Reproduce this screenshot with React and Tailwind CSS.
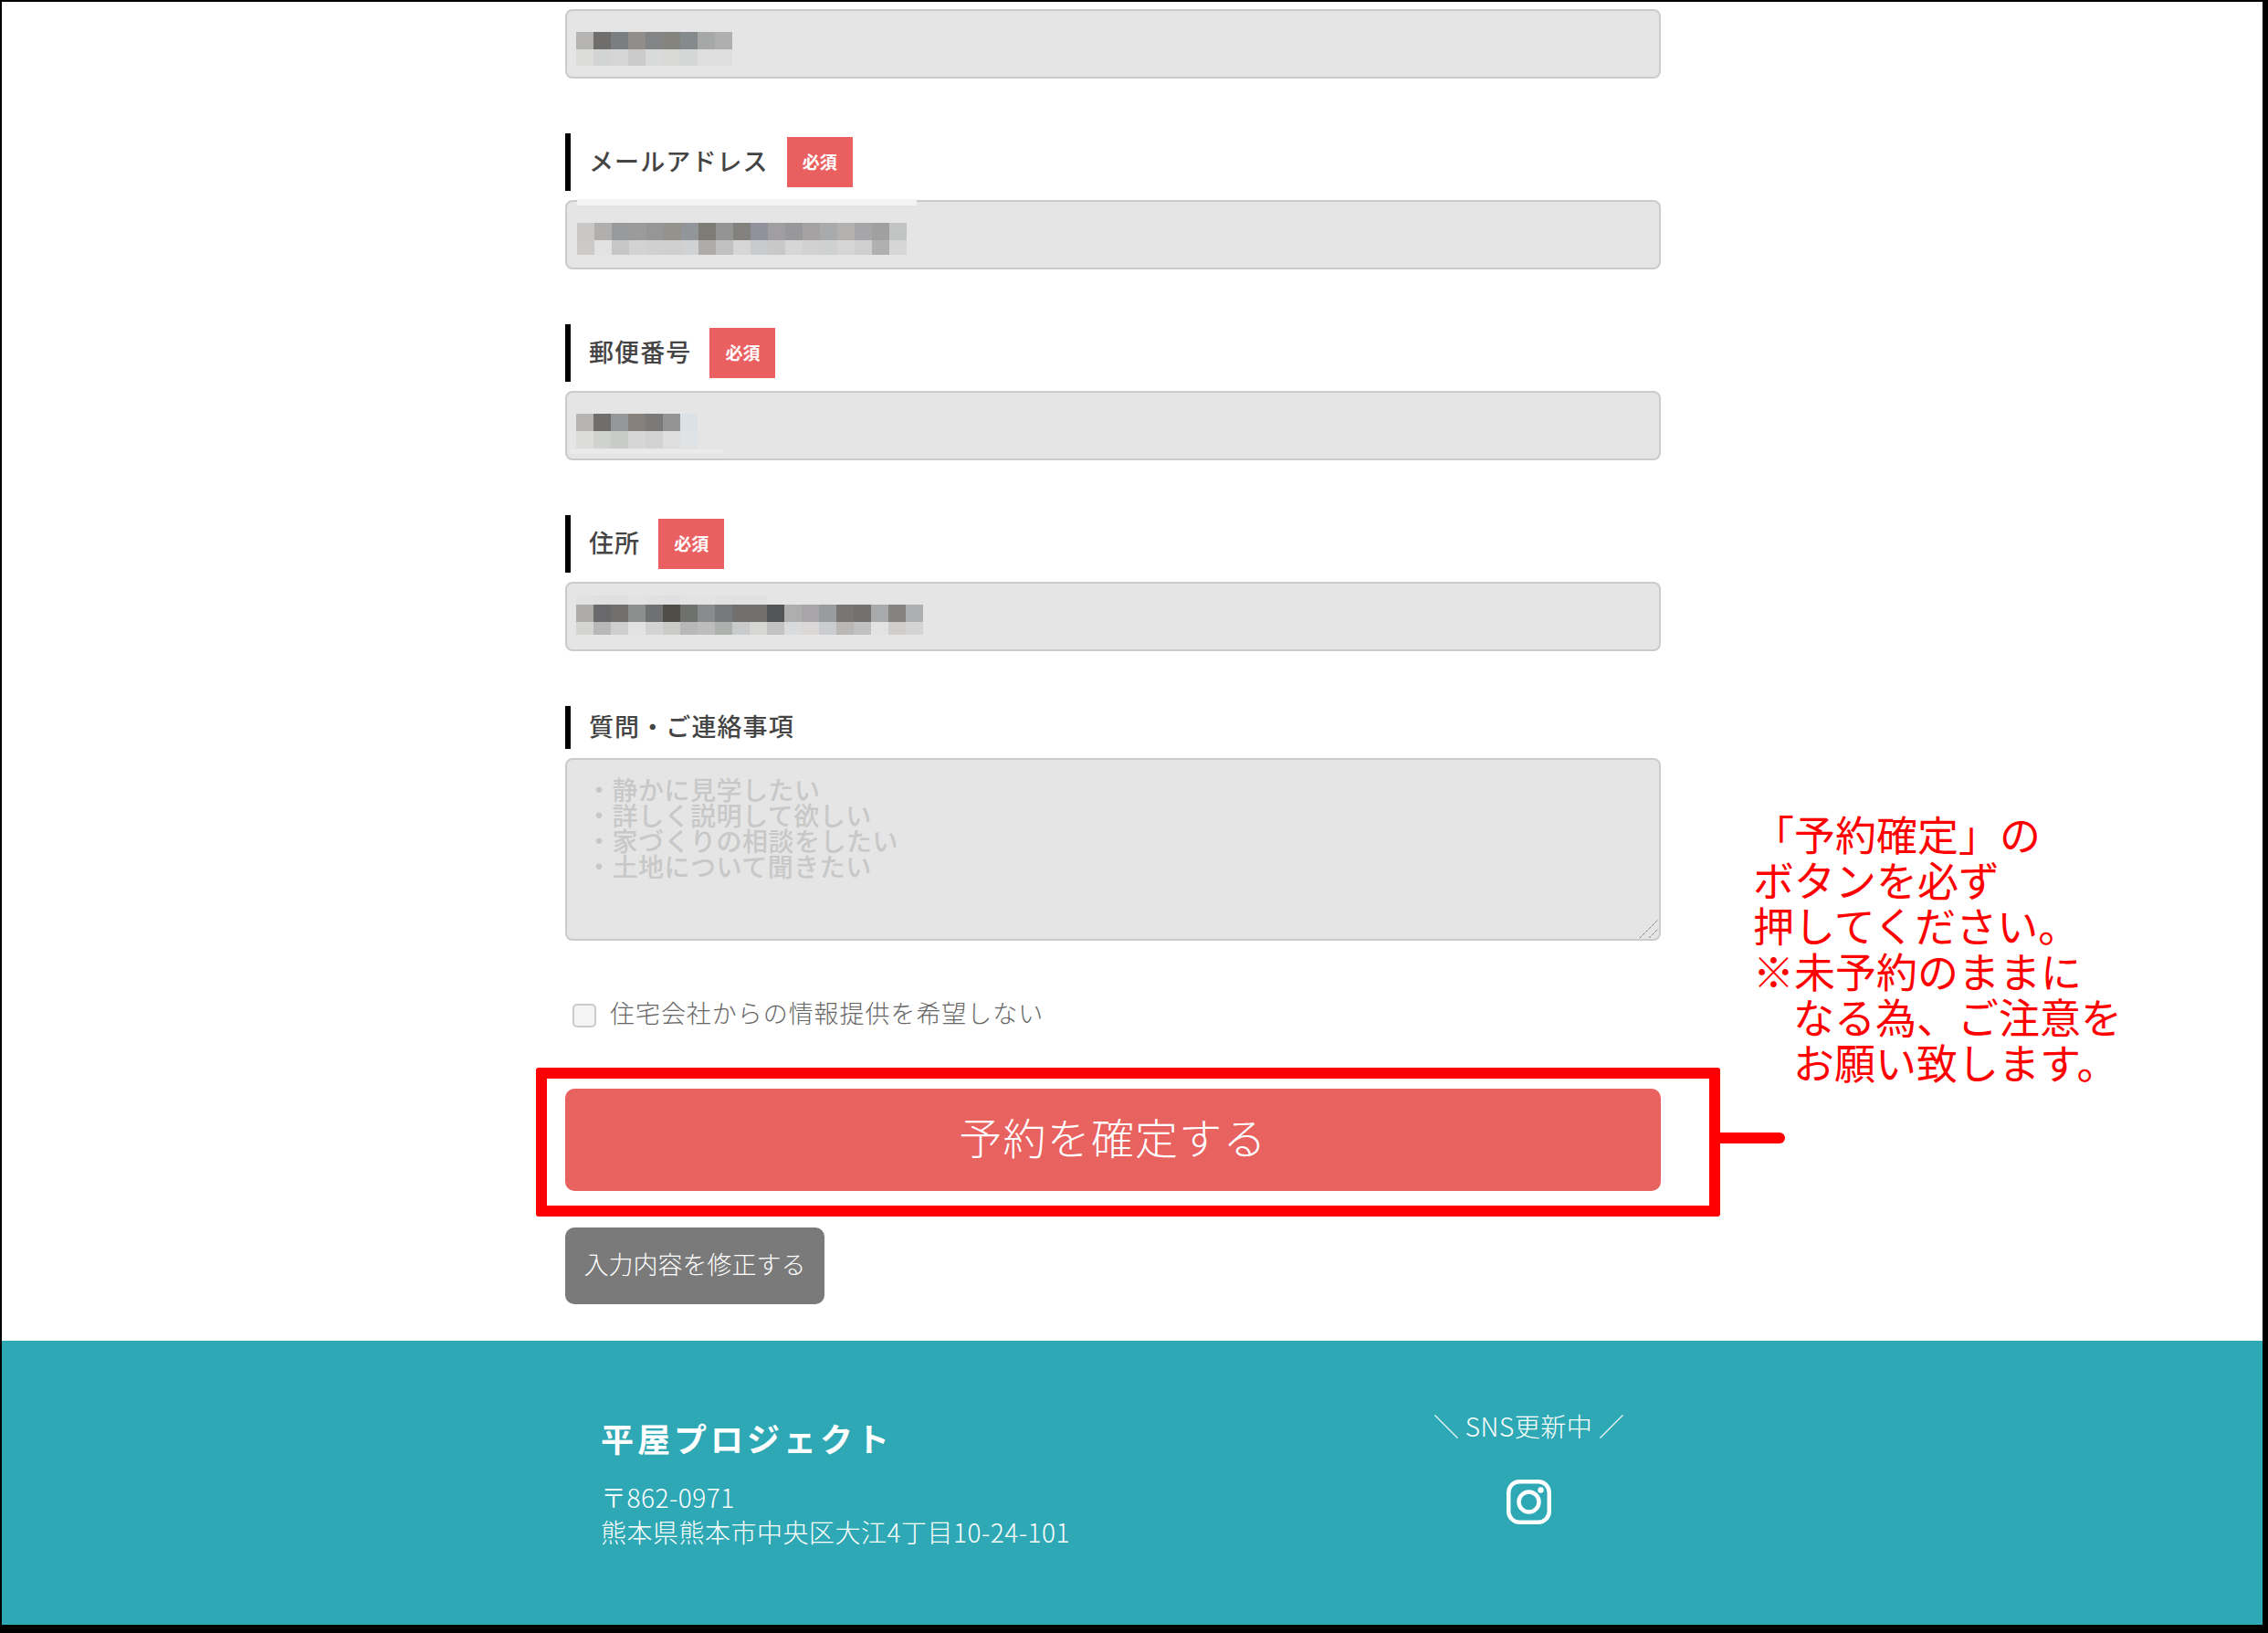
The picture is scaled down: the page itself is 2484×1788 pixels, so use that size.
const font = { fontFamily: '"Noto Sans CJK JP", "Noto Sans", sans-serif' }

const pixelRows = {
  name: {
    className: 'pt-[23px] pl-[10px]',
    rows: [
      { h: 'h-[19px]', colors: ['#b5b4b2', '#706e6c', '#7b7e81', '#918d8a', '#828486', '#85837e', '#858a8c', '#a6a8a7', '#afafaf'] },
      { h: 'h-[18px]', colors: ['#dcdcda', '#d3d5d4', '#d6d6d6', '#cbcbcb', '#d9dbda', '#d8d8d5', '#d5d7d6', '#dedede', '#dedede'] },
    ],
  },
  mail: {
    className: 'pt-[23px] pl-[11px]',
    rows: [
      { h: 'h-[19px]', colors: ['#c9c8c6', '#b0afad', '#999a9c', '#9a9b9a', '#959695', '#93928d', '#92969a', '#7c7b76', '#939493', '#82817e', '#90919a', '#a09ea0', '#98989b', '#a4a2a3', '#a9aaac', '#b3b2b0', '#a6a6a8', '#a0a0a0', '#c2c3c3'] },
      { h: 'h-[16px]', colors: ['#cbcac8', '#e2e2e2', '#c6c6c6', '#d2d2d2', '#d0d0d0', '#cfcfcf', '#d0d1d3', '#adacaa', '#c0c1c0', '#d6d6d6', '#c9cacd', '#c8c8c8', '#d6d6d6', '#d1d1d1', '#cfd0d0', '#d5d5d5', '#cfcfcf', '#b0b0b0', '#d6d6d6'] },
    ],
  },
  zip: {
    className: 'pt-[23px] pl-[10px]',
    rows: [
      { h: 'h-[19px]', colors: ['#b6b5b2', '#706e6b', '#95989a', '#86817d', '#7b7a79', '#949494', '#dce1e5'] },
      { h: 'h-[19px]', colors: ['#dcdcda', '#d0d2d0', '#c9cbc9', '#d6d6d6', '#d2d2d2', '#dedede', '#e0e3e6'] },
    ],
  },
  address: {
    className: 'pt-[13px] pl-[10px]',
    rows: [
      { h: 'h-[10px]', colors: ['#e2e2e2', '#dfdfdf', '#dfdfdf', '#e3e3e3', '#e1e1e1', '#dfdfdf', '#e3e3e3', '#e3e3e3', '#e1e1e1', '#e1e1e1', '#e1e1e1', '#e5e5e5', '#e5e5e5', '#e5e5e5', '#e5e5e5', '#e5e5e5', '#e5e5e5', '#e5e5e5', '#e5e5e5', '#e5e5e5'] },
      { h: 'h-[19px]', colors: ['#aeaca8', '#69696c', '#716e6d', '#8c8e8d', '#6f7072', '#4f4d48', '#6f716d', '#8a8b8c', '#777a7c', '#72706e', '#71706e', '#535456', '#aeaeae', '#a8a6a8', '#999c9d', '#777674', '#727170', '#a9aaac', '#85837f', '#aeafb2'] },
      { h: 'h-[14px]', colors: ['#d4d4d3', '#b8b8b8', '#cfcfcf', '#e2e2e2', '#d3d3d3', '#cbcbc9', '#b8b8b8', '#bdbdbd', '#aeb0ae', '#c9cacc', '#d6d6d4', '#c2c2c2', '#d9dadc', '#d9d8d6', '#cbcccf', '#b9b8b6', '#c1c1c1', '#e2e2e2', '#cfcecc', '#d4d4d4'] },
    ],
  },
}

const placeholder = '・静かに見学したい\n・詳しく説明して欲しい\n・家づくりの相談をしたい\n・土地について聞きたい'

const noteLines = [
  { text: '「予約確定」の', indent: false },
  { text: 'ボタンを必ず', indent: false },
  { text: '押してください。', indent: false },
  { text: '※未予約のままに', indent: false },
  { text: 'なる為、ご注意を', indent: true },
  { text: 'お願い致します。', indent: true },
]

function Pixelated({ name }) {
  const data = pixelRows[name]
  return (
    <div className={data.className}>
      {data.rows.map((row, i) => (
        <div key={i} className={`flex ${row.h}`}>
          {row.colors.map((color, j) => (
            <div key={j} className="w-[19px] h-full" style={{ backgroundColor: color }} />
          ))}
        </div>
      ))}
    </div>
  )
}

function FieldLabel({ children, required, short }) {
  return (
    <div className={`flex items-center border-l-[6px] border-black pl-[20px] ${short ? 'h-[47px]' : 'h-[63px]'}`}>
      <span className="-mt-[3px] text-[27px] font-medium tracking-[1.1px] text-[#444]">{children}</span>
      {required && (
        <span className="ml-[20px] flex h-[55px] w-[72px] items-center justify-center bg-[#ea6060] text-[19px] font-bold text-white">
          必須
        </span>
      )}
    </div>
  )
}

function Field({ label, name, strip }) {
  return (
    <div className="mt-[60px] first:mt-0">
      {label && (
        <div className="mb-[10px]">
          <FieldLabel required>{label}</FieldLabel>
        </div>
      )}
      <div className="relative h-[76px] overflow-visible rounded-[8px] border-2 border-[#cbcbcb] bg-[#e5e5e5]">
        <Pixelated name={name} />
        {strip}
      </div>
    </div>
  )
}

function InstagramIcon() {
  return (
    <svg viewBox="0 0 49 49" className="h-[49px] w-[49px]" fill="none" stroke="white" strokeWidth="4.5">
      <rect x="2.25" y="2.25" width="44.5" height="44.5" rx="12" />
      <circle cx="24.5" cy="24.5" r="11" />
      <circle cx="37.5" cy="11.5" r="3.2" fill="white" stroke="none" />
    </svg>
  )
}

function App() {
  return (
    <div className="relative h-[1788px] w-[2484px] overflow-hidden border-t-2 border-r-[6px] border-l-2 border-black bg-white" style={font}>
      <main className="ml-[617px] w-[1200px] pt-[8px]">
        <Field name="name" />
        <Field
          label="メールアドレス"
          name="mail"
          strip={<div className="absolute -top-[3px] left-[11px] h-[7px] w-[372px] bg-[#f3f3f3]" />}
        />
        <Field
          label="郵便番号"
          name="zip"
          strip={<div className="absolute bottom-[5px] left-[3px] h-[5px] w-[169px] bg-[#eaeaea]" />}
        />
        <Field label="住所" name="address" />

        <div className="mt-[60px]">
          <div className="mb-[10px]">
            <FieldLabel short>質問・ご連絡事項</FieldLabel>
          </div>
          <div className="relative">
            <textarea
              readOnly
              placeholder={placeholder}
              className="block h-[200px] w-full resize-none rounded-[8px] border-2 border-[#cbcbcb] bg-[#e5e5e5] px-[21px] pt-[18px] text-[28px] leading-[28px] font-medium tracking-[0.5px] placeholder:text-[#c8c8c8]"
            />
            {/* resize grip */}
            <svg viewBox="0 0 24 24" className="absolute right-[2px] bottom-[2px] h-[24px] w-[24px]" stroke="#555" strokeWidth="1" strokeDasharray="1 1">
              <path d="M3 23 L23 3" />
              <path d="M13 23 L23 13" />
            </svg>
          </div>
        </div>

        <div className="mt-[59px] flex items-center pl-[8px]">
          <span className="mt-[6px] h-[26px] w-[26px] rounded-[5px] border-2 border-[#cbcbcb] bg-[#f5f5f5]" />
          <span className="ml-[15px] text-[27px] leading-[40px] tracking-[0.95px] font-light text-[#666]">
            住宅会社からの情報提供を希望しない
          </span>
        </div>

        <button className="mt-[63px] flex h-[112px] w-full items-center justify-center rounded-[10px] bg-[#e8625f] pb-[8px] text-[47px] tracking-[1.2px] font-light text-white">
          予約を確定する
        </button>
        <button className="mt-[40px] flex h-[84px] w-[284px] items-center justify-center rounded-[10px] bg-[#7a7a7a] pb-[3px] text-[27px] font-light text-white">
          入力内容を修正する
        </button>
      </main>

      <footer className="mt-[40px] flex h-[311px] bg-[#2ea8b5] text-white">
        <div className="ml-[656px] w-[830px] pt-[81px]">
          <div className="text-[36px] leading-[50px] font-bold tracking-[4px]">平屋プロジェクト</div>
          <div className="mt-[21px] text-[28px] leading-[38px] tracking-[0.5px] font-light">
            <p>〒862-0971</p>
            <p>熊本県熊本市中央区大江4丁目10-24-101</p>
          </div>
        </div>
        <div className="flex w-[373px] flex-col items-center pt-[74px]">
          <div className="text-[28px] leading-[38px] tracking-[0.5px] font-light">＼ SNS更新中 ／</div>
          <div className="mt-[40px]">
            <InstagramIcon />
          </div>
        </div>
      </footer>
      <div className="h-[9px] bg-black" />

      {/* annotation drawn over the form */}
      <div className="absolute left-[585px] top-[1167px] h-[163px] w-[1297px] rounded-[3px] border-[12px] border-[#ff0000]" />
      <div className="absolute left-[1881px] top-[1238px] h-[12px] w-[72px] rounded-r-full bg-[#ff0000]" />
      <div className="absolute left-[1918px] top-[886px] text-[45px] leading-[50px] text-[#ff0000]">
        {noteLines.map((line) => (
          <div key={line.text} className={line.indent ? 'pl-[44px]' : ''}>
            {line.text}
          </div>
        ))}
      </div>
    </div>
  )
}

export default App
